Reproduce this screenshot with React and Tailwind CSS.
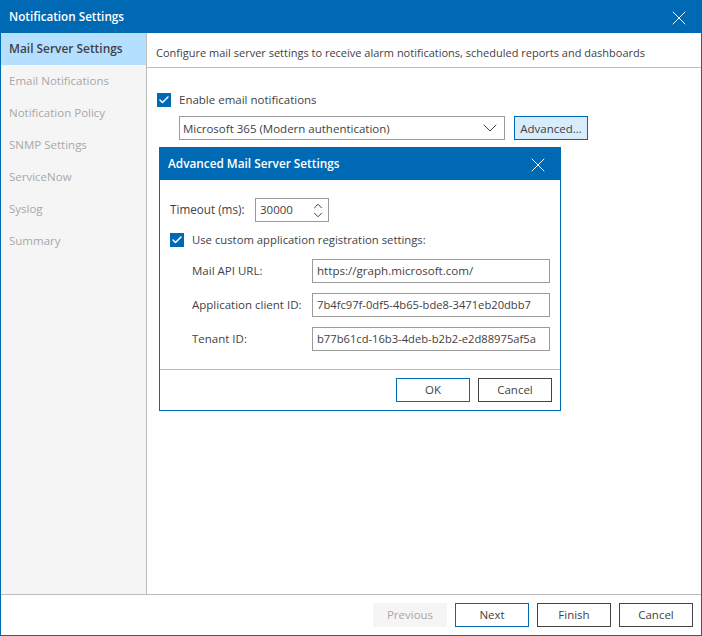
import { ChevronDown, ChevronUp, Check, X } from "lucide-react";

const navItems = [
  "Email Notifications",
  "Notification Policy",
  "SNMP Settings",
  "ServiceNow",
  "Syslog",
  "Summary",
];

const fields = [
  { label: "Mail API URL:", value: "https://graph.microsoft.com/", size: "text-[11.6px]" },
  { label: "Application client ID:", value: "7b4fc97f-0df5-4b65-bde8-3471eb20dbb7", size: "text-[11.2px]" },
  { label: "Tenant ID:", value: "b77b61cd-16b3-4deb-b2b2-e2d88975af5a", size: "text-[11.2px]" },
];

const CheckBox = () => (
  <span className="flex h-[14px] w-[14px] items-center justify-center bg-[#0069b4]">
    <Check size={12} strokeWidth={3} className="text-white" />
  </span>
);

const Button = ({ children, className = "border-[#444444]" }) => (
  <button className={`h-6 w-[74px] border text-[#3f3f46] ${className}`}>
    {children}
  </button>
);

const AdvancedDialog = () => (
  <div className="absolute left-[158px] top-[147px] flex h-[264px] w-[402px] flex-col border border-[#0069b4] bg-white">
    <div className="-mt-px flex h-[33px] shrink-0 items-center justify-between bg-[#0069b4] pl-2 pr-[10px] text-white">
      <span className="text-[11.8px] font-semibold">Advanced Mail Server Settings</span>
      <X size={24} strokeWidth={1} className="mt-[3px]" />
    </div>
    <div className="flex-1 pl-[10px] pr-[10px] pt-[18px]">
      <div className="flex items-center">
        <span className="w-[85px] text-[11.7px]">Timeout (ms):</span>
        <div className="flex h-6 w-[74px] items-center justify-between border border-[#9b9b9b] pl-[4px] pr-[3px]">
          <span>30000</span>
          <div className="flex flex-col">
            <ChevronUp size={14} strokeWidth={1.7} className="-mb-[5px]" />
            <ChevronDown size={14} strokeWidth={1.7} />
          </div>
        </div>
      </div>
      <div className="mt-[10px] flex items-center gap-[8px]">
        <CheckBox />
        <span className="text-[11.3px]">Use custom application registration settings:</span>
      </div>
      <div className="mt-[10px] flex flex-col gap-[10px] pl-[22px]">
        {fields.map((field) => (
          <div key={field.label} className="flex items-center">
            <span className="w-[120px]">{field.label}</span>
            <div className={`flex h-6 w-[238px] items-center border border-[#9b9b9b] pl-[4px] ${field.size}`}>
              {field.value}
            </div>
          </div>
        ))}
      </div>
    </div>
    <div className="flex h-[41px] shrink-0 items-start justify-end gap-[8px] border-t border-[#bdbdbd] pr-2 pt-2">
      <Button className="border-[#0069b4]">OK</Button>
      <Button>Cancel</Button>
    </div>
  </div>
);

export default function App() {
  return (
    <div
      className="relative flex h-[636px] w-[702px] flex-col whitespace-nowrap border-x border-b border-[#0069b4] bg-white text-[11.5px] text-[#3f3f46]"
      style={{ fontFamily: '"Open Sans", "Noto Sans", sans-serif' }}
    >
      <div className="-mx-px flex h-[33px] shrink-0 items-center justify-between bg-[#0069b4] pl-[9px] pr-[11px] text-white">
        <span className="text-[11.7px] font-semibold">Notification Settings</span>
        <X size={24} strokeWidth={1} className="mt-[3px]" />
      </div>

      <div className="flex min-h-0 flex-1">
        <div className="w-[146px] shrink-0 border-r border-[#bdbdbd] bg-[#f5f5f5]">
          <div className="flex h-[32px] items-center bg-[#b5dfff] pb-[1px] pl-2 text-[11.9px] font-semibold">
            Mail Server Settings
          </div>
          {navItems.map((item) => (
            <div key={item} className="flex h-[32px] items-center pb-[1px] pl-2 text-[#a8a8a8]">
              {item}
            </div>
          ))}
        </div>

        <div className="flex-1">
          <div className="flex h-[35px] items-center border-b border-[#bdbdbd] pl-[9px] pt-[6px] text-[11px]">
            Configure mail server settings to receive alarm notifications, scheduled reports and dashboards
          </div>
          <div className="pl-[10px] pt-[25px]">
            <div className="-mt-[2px] flex items-center gap-[8px]">
              <CheckBox />
              <span>Enable email notifications</span>
            </div>
            <div className="mt-[8px] flex items-center gap-[9px] pl-[22px]">
              <div className="flex h-6 w-[326px] items-center justify-between border border-[#9b9b9b] pl-[3px] pr-[2px]">
                <span>Microsoft 365 (Modern authentication)</span>
                <ChevronDown size={24} strokeWidth={1} />
              </div>
              <Button className="border-[#0069b4] bg-[#d9ecfb]">Advanced...</Button>
            </div>
          </div>
        </div>
      </div>

      <div className="flex h-[41px] shrink-0 items-start justify-end gap-[8px] border-t border-[#bdbdbd] pr-[8px] pt-2">
        <button className="h-6 w-[74px] bg-[#f5f5f5] text-[#a8a8a8]">Previous</button>
        <Button className="border-[#0069b4]">Next</Button>
        <Button>Finish</Button>
        <Button>Cancel</Button>
      </div>

      <AdvancedDialog />
    </div>
  );
}
